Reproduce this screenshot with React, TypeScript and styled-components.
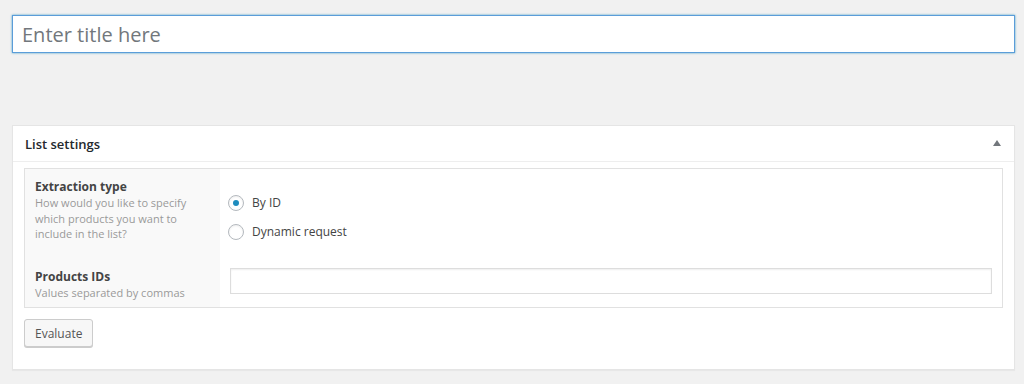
import React from "react";
import styled, { createGlobalStyle } from "styled-components";

const Global = createGlobalStyle`
  html, body { margin: 0; padding: 0; background: #f1f1f1; }
  body { font-family: "Open Sans", "Noto Sans", sans-serif; font-size: 12px; color: #444; }
  * { box-sizing: border-box; }
`;

const Page = styled.div`
  padding: 15px 9px 15px 12px;
  display: flex;
  flex-direction: column;
  gap: 72px;
`;

const TitleInput = styled.input`
  display: block;
  width: 100%;
  height: 38px;
  margin: 0;
  padding: 1px 9px 0;
  border: 1px solid #5b9dd9;
  box-shadow: 0 0 2px rgba(30, 140, 190, 0.8);
  background: #fff;
  font-family: "Open Sans", sans-serif;
  font-size: 20px;
  color: #32373c;
  outline: none;
  &::placeholder { color: #72777c; }
`;

const Postbox = styled.section`
  background: #fff;
  border: 1px solid #e5e5e5;
  box-shadow: 0 1px 1px rgba(0, 0, 0, 0.04);
`;

const Header = styled.div`
  height: 36px;
  display: flex;
  align-items: center;
  justify-content: space-between;
  padding: 0 13px 0 12px;
  border-bottom: 1px solid #eee;
`;

const HeaderTitle = styled.h2`
  margin: 0;
  font-size: 13px;
  font-weight: 600;
  color: #23282d;
  line-height: 1;
  padding-top: 1px;
`;

const Toggle = styled.span`
  width: 0;
  height: 0;
  border-left: 4px solid transparent;
  border-right: 4px solid transparent;
  border-bottom: 6px solid #72777c;
  margin-top: -2px;
`;

const Inside = styled.div`
  padding: 6px 11px 22px 11px;
  display: flex;
  flex-direction: column;
  align-items: flex-start;
  gap: 11px;
`;

const Table = styled.div`
  width: 100%;
  border: 1px solid #e1e1e1;
  display: grid;
  grid-template-columns: 195px 1fr;
`;

const LabelCell = styled.div<{ $pt: number; $pb: number }>`
  background: #f9f9f9;
  padding: ${(p) => p.$pt}px 11px ${(p) => p.$pb}px 10px;
`;

const ValueCell = styled.div<{ $pt: number }>`
  padding: ${(p) => p.$pt}px 10px 0 10px;
`;

const Label = styled.div`
  font-size: 12px;
  font-weight: 700;
  line-height: 16px;
  color: #444;
`;

const Description = styled.div`
  font-size: 11px;
  line-height: 15.6px;
  color: #999;
`;

const RadioList = styled.div`
  display: flex;
  flex-direction: column;
  gap: 13px;
`;

const RadioRow = styled.label`
  display: flex;
  align-items: center;
  gap: 8px;
  margin-left: -2px;
  font-size: 12px;
  line-height: 16px;
  color: #444;
`;

const RadioCircle = styled.span<{ $checked?: boolean }>`
  width: 16px;
  height: 16px;
  border-radius: 50%;
  border: 1px solid #b4b9be;
  background: #fff;
  box-shadow: inset 0 1px 2px rgba(0, 0, 0, 0.07);
  display: flex;
  align-items: center;
  justify-content: center;
  &::after {
    content: "";
    width: 6px;
    height: 6px;
    border-radius: 50%;
    background: ${(p) => (p.$checked ? "#1e8cbe" : "transparent")};
  }
`;

const TextInput = styled.input`
  display: block;
  width: 100%;
  height: 26px;
  margin: 0;
  border: 1px solid #ddd;
  box-shadow: inset 0 1px 2px rgba(0, 0, 0, 0.07);
  background: #fff;
  outline: none;
`;

const Button = styled.button`
  height: 28px;
  padding: 0 10px;
  margin: 0;
  font-family: "Open Sans", sans-serif;
  font-size: 12px;
  color: #555;
  background: #f7f7f7;
  border: 1px solid #ccc;
  border-radius: 3px;
  box-shadow: 0 1px 0 #ccc;
  cursor: pointer;
`;

export default function App() {
  return (
    <>
      <Global />
      <Page>
        <TitleInput placeholder="Enter title here" />
        <Postbox>
          <Header>
            <HeaderTitle>List settings</HeaderTitle>
            <Toggle />
          </Header>
          <Inside>
            <Table>
              <LabelCell $pt={10} $pb={17}>
                <Label>Extraction type</Label>
                <Description>
                  How would you like to specify which products you want to include in the list?
                </Description>
              </LabelCell>
              <ValueCell $pt={26}>
                <RadioList>
                  <RadioRow>
                    <RadioCircle $checked />
                    By ID
                  </RadioRow>
                  <RadioRow>
                    <RadioCircle />
                    Dynamic request
                  </RadioRow>
                </RadioList>
              </ValueCell>
              <LabelCell $pt={10} $pb={7}>
                <Label>Products IDs</Label>
                <Description>Values separated by commas</Description>
              </LabelCell>
              <ValueCell $pt={9}>
                <TextInput />
              </ValueCell>
            </Table>
            <Button>Evaluate</Button>
          </Inside>
        </Postbox>
      </Page>
    </>
  );
}
